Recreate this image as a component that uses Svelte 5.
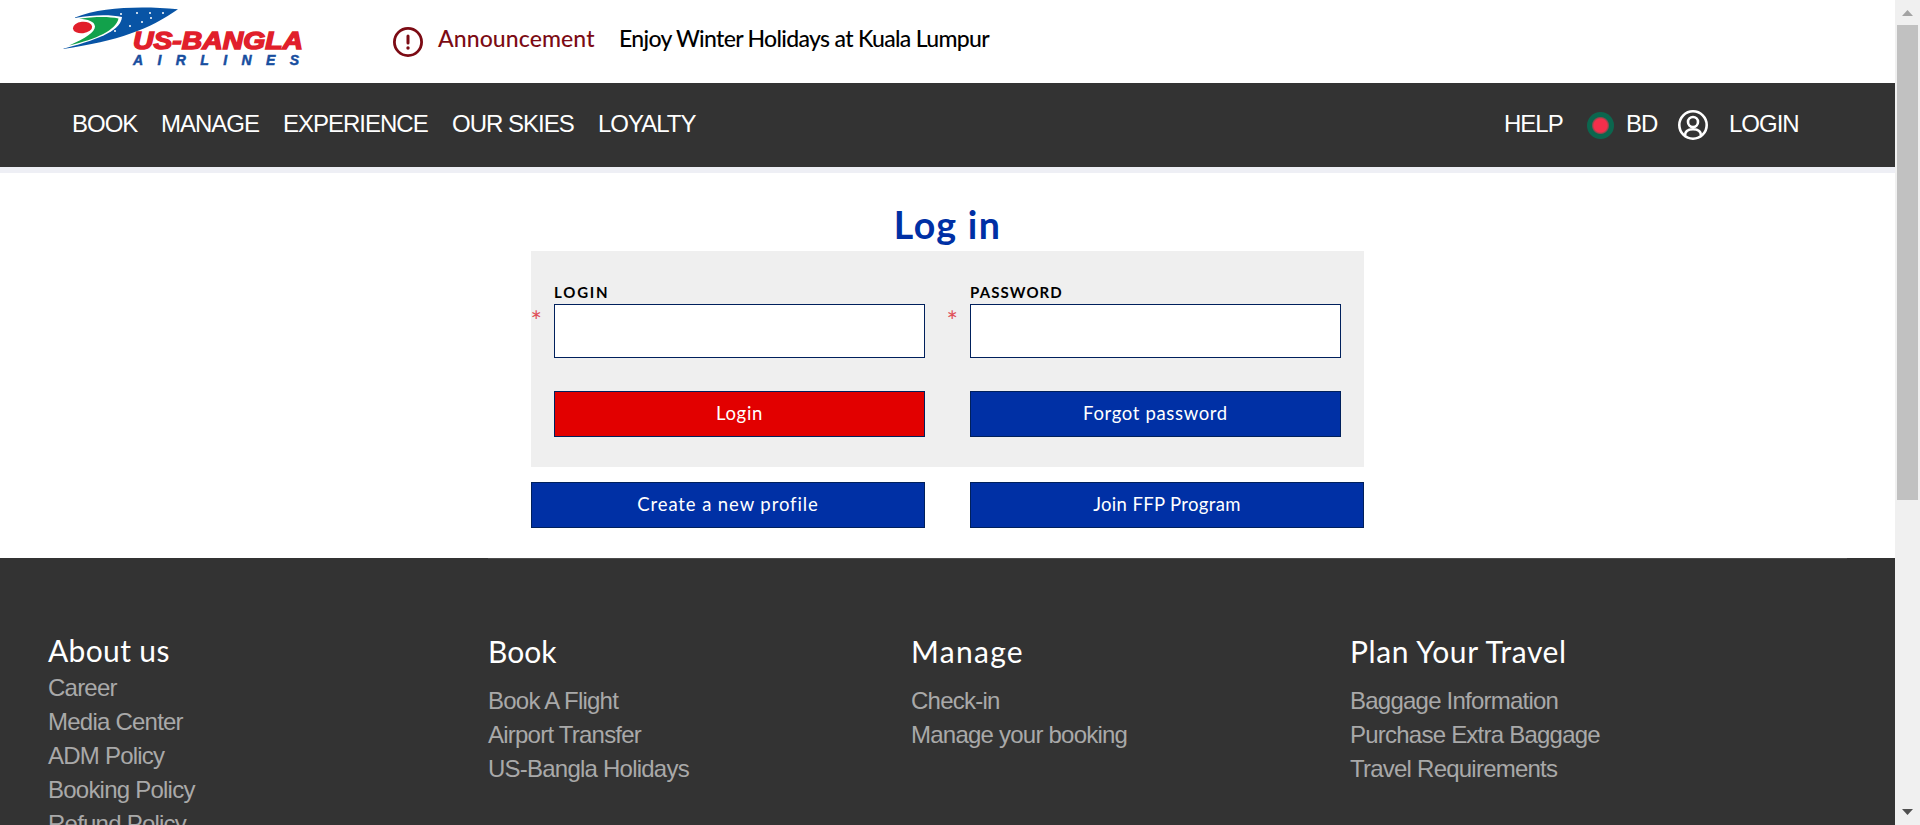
<script>
  const menu = [
    { text: 'BOOK', w: 89 },
    { text: 'MANAGE', w: 122 },
    { text: 'EXPERIENCE', w: 169 },
    { text: 'OUR SKIES', w: 146 },
    { text: 'LOYALTY', w: 110 }
  ];
  const columns = [
    { title: 'About us', cls: 'about', links: ['Career', 'Media Center', 'ADM Policy', 'Booking Policy', 'Refund Policy'] },
    { title: 'Book', cls: 'book', links: ['Book A Flight', 'Airport Transfer', 'US-Bangla Holidays'] },
    { title: 'Manage', cls: 'manage', links: ['Check-in', 'Manage your booking'] },
    { title: 'Plan Your Travel', cls: 'plan', links: ['Baggage Information', 'Purchase Extra Baggage', 'Travel Requirements'] }
  ];
  const stars = [[137, 13], [150, 13], [163, 13], [121, 14], [142, 22], [151, 18], [130, 26], [115, 31]];
</script>

<div class="window">
  <div class="page">
    <header>
      <svg class="logo" width="250" height="70" viewBox="60 0 250 70">
        <path d="M75 17.500 C102 7 140 6 178 9.200 C150 29 118 41 63 49 L74 43Z" fill="#0854a5" />
        <path d="M75 18 C94 14.500 110 14.500 122 17 C121 29 104 38 65 48.200 L60 46 L66 22Z" fill="#fff" />
        <path d="M79 18.700 C95 16.500 109 16.300 118.500 18.500 C116 30 97 39 69 45.500 C86 38 95 32 95 26.500 C94.500 21 88 19.500 79 18.700Z" fill="#12a14b" />
        <ellipse cx="82.500" cy="27.500" rx="9.700" ry="5.800" fill="#e11f2b" transform="rotate(-6 82.500 27.500)" />
        {#each stars as [x, y]}<circle cx={x} cy={y} r="1" fill="#fff" />{/each}
        <text class="brand" x="133" y="49" textLength="170" lengthAdjust="spacingAndGlyphs">US-BANGLA</text>
        <text class="sub" x="133" y="65" textLength="166">AIRLINES</text>
      </svg>
      <svg class="alert" width="30" height="30" viewBox="0 0 30 30">
        <circle cx="15" cy="15" r="13.600" fill="none" stroke="#7c0b14" stroke-width="2.800" />
        <path d="M15 9v7" stroke="#7c0b14" stroke-width="3" stroke-linecap="round" />
        <circle cx="15" cy="21" r="1.700" fill="#7c0b14" />
      </svg>
      <span class="announce">Announcement</span>
      <span class="news">Enjoy Winter Holidays at Kuala Lumpur</span>
    </header>

    <nav>
      {#each menu as m}<a style:width="{m.w}px">{m.text}</a>{/each}
      <span class="grow"></span>
      <a class="help">HELP</a>
      <span class="flag"></span>
      <a class="bd">BD</a>
      <svg class="user" width="30" height="30" viewBox="0 0 30 30" fill="none" stroke="#fff" stroke-width="2.600">
        <circle cx="15" cy="15" r="13.700" />
        <circle cx="15" cy="12" r="5" />
        <path d="M7 25.500C7 21 10 19.300 15 19.300S23 21 23 25.500" />
      </svg>
      <a class="signin">LOGIN</a>
    </nav>

    <main>
      <h1>Log in</h1>
      <section class="panel">
        <div class="field"><label class="l1" for="login">LOGIN</label><span class="star">*</span><input id="login" /></div>
        <div class="field"><label for="password">PASSWORD</label><span class="star">*</span><input id="password" type="password" /></div>
        <button class="red">Login</button>
        <button class="forgot">Forgot password</button>
      </section>
      <div class="more">
        <button class="create">Create a new profile</button>
        <button class="join">Join FFP Program</button>
      </div>
    </main>

    <div class="rule"></div>
    <footer>
      {#each columns as c}
        <div class="col {c.cls}">
          <h2>{c.title}</h2>
          {#each c.links as l}<a>{l}</a>{/each}
        </div>
      {/each}
    </footer>
  </div>
  <aside>
    <svg width="11" height="6"><path d="M0 6L5.500 0L11 6Z" fill="#a3a3a3" /></svg>
    <div class="thumb"></div>
    <svg class="down" width="11" height="6"><path d="M0 0L5.500 6L11 0Z" fill="#505050" /></svg>
  </aside>
</div>

<style>
  :global(body) { margin: 0; overflow: hidden; }
  .window { display: flex; width: 1920px; height: 825px; overflow: hidden; background: #fff; font-family: "Liberation Sans", Arial, sans-serif; }
  .page { width: 1895px; height: 825px; overflow: hidden; }
  header { height: 83px; display: flex; align-items: flex-start; white-space: nowrap; }
  .logo { margin-left: 60px; flex: none; }
  .brand { font: italic 900 23.500px "Liberation Sans", Arial, sans-serif; fill: #e11f2b; stroke: #e11f2b; stroke-width: 1.400; }
  .sub { font: italic 700 14px "Liberation Sans", Arial, sans-serif; fill: #174e9f; stroke: #174e9f; stroke-width: .5; }
  .alert { margin: 27px 0 0 83px; flex: none; }
  .announce, .news { font: 500 23px/30px Lato, sans-serif; margin-top: 23px; }
  .announce { color: #7c0b14; margin-left: 15px; width: 181px; letter-spacing: .1px; }
  .news { color: #000; letter-spacing: -.68px; }
  nav { height: 84px; box-sizing: border-box; background: #333; display: flex; align-items: center; padding: 0 95px 0 72px; color: #fff; font-size: 24px; letter-spacing: -1px; white-space: nowrap; box-shadow: 0 6px 0 #eeeff5; }
  nav a { line-height: 30px; padding-bottom: 2px; }
  .grow { flex: 1; }
  .help { width: 83px; }
  .flag { width: 27px; height: 27px; border-radius: 50%; background: radial-gradient(circle, #f42f4b 0 6.500px, #8a4a4c 8px, #0b664e 9px); margin-right: 12px; }
  .bd { width: 52px; }
  .user { margin-right: 21px; flex: none; }
  .signin { width: 71px; }
  main { height: 391px; width: 833px; margin: 0 0 0 531px; display: flex; flex-direction: column; }
  h1 { margin: 32px 0 0; height: 52px; font: 700 37.500px/52px Lato, sans-serif; letter-spacing: 1.300px; color: #0030a5; text-align: center; }
  .panel { height: 216px; flex: none; box-sizing: border-box; background: #efefef; padding: 32px 23px 30px; display: grid; grid-template-columns: 371px 371px; column-gap: 45px; grid-template-rows: 108px 46px; }
  .field { position: relative; }
  label { display: block; height: 21px; font: 700 15px/19px Lato, sans-serif; letter-spacing: 1.100px; color: #000; }
  .l1 { letter-spacing: 1.800px; }
  input { display: block; box-sizing: border-box; width: 371px; height: 54px; border: 1px solid #00205c; background: #fff; outline: 0; }
  .star { position: absolute; left: -23.500px; top: 26px; font: 27px/24px Lato, sans-serif; color: #e05058; }
  button { height: 46px; box-sizing: border-box; border: 1px solid #00205c; background: #0030a5; color: #fff; padding: 0 0 2px; font: 400 18.500px/42px Lato, sans-serif; letter-spacing: .65px; }
  .red { background: #e20000; }
  .create { letter-spacing: .9px; }
  .join { letter-spacing: .35px; }
  .more { display: grid; grid-template-columns: 394px 394px; column-gap: 45px; margin-top: 15px; }
  .rule { height: 1px; background: linear-gradient(90deg, #333 0 488px, #4b4b4b 488px 1847px, #333 1847px); }
  footer { height: 266px; background: #333; display: flex; color: #a9a9a9; white-space: nowrap; padding-left: 48px; }
  .col { display: flex; flex-direction: column; }
  .about { width: 440px; }
  .book { width: 423px; }
  .manage { width: 439px; }
  h2 { margin: 74px 0 0; font: 400 30px/36px Lato, sans-serif; color: #fff; height: 51px; flex: none; }
  .about h2 { margin-top: 73px; height: 39px; letter-spacing: .35px; }
  .manage h2 { letter-spacing: 1.300px; }
  .plan h2 { letter-spacing: .6px; }
  .col a { font-size: 24px; line-height: 34px; letter-spacing: -.77px; flex: none; }
  aside { width: 25px; background: #f0f0f0; display: flex; flex-direction: column; align-items: center; padding-top: 10px; box-sizing: border-box; height: 825px; }
  aside svg { flex: none; display: block; }
  .thumb { width: 21px; height: 475px; margin-top: 9px; background: #c1c1c1; }
  .down { margin-top: 309px; }
</style>
